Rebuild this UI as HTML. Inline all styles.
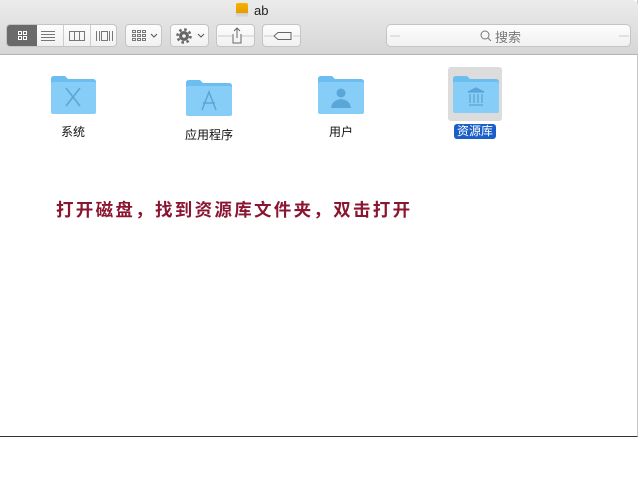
<!DOCTYPE html>
<html><head><meta charset="utf-8"><style>
*{margin:0;padding:0;box-sizing:border-box}
body{width:640px;height:480px;background:#fff;position:relative;overflow:hidden;font-family:"Liberation Sans","Noto Sans CJK SC",sans-serif}
.win{position:absolute;left:0;top:0;width:638px;height:437px;border-right:1px solid #c8c8c8;border-bottom:1px solid #333;background:#fff}
.tb{position:absolute;left:0;top:0;width:638px;height:55px;background:linear-gradient(#ebebeb,#d6d6d6);border-bottom:1px solid #b5b5b5;border-top-right-radius:6px}
.a{position:absolute}
.btn{position:absolute;top:24px;height:23px;background:linear-gradient(#fdfdfd,#f1f1f1);border:1px solid #c4c4c4;border-radius:4px}
.lbl{position:absolute;font-size:12px;color:#111;transform:translateX(-50%);white-space:nowrap}
</style></head><body>
<div class="win">
<div class="tb">
  <div class="a" style="left:236px;top:3px;width:12px;height:14px;background:linear-gradient(#f5b400,#e89a00 70%,#ccc 70%,#ddd);border-radius:2px"></div>
  <div class="a" style="left:254px;top:3px;font-size:13px;color:#222">ab</div>
  <div class="btn" style="left:6px;width:111px;overflow:hidden">
    <div class="a" style="left:0;top:0;width:30px;height:21px;background:#6a6a6a"></div>
    <svg class="a" style="left:0;top:0" width="111" height="21">
      <g fill="none" stroke="#fff" stroke-width="1"><rect x="11.5" y="6.5" width="3" height="3"/><rect x="16.5" y="6.5" width="3" height="3"/><rect x="11.5" y="11.5" width="3" height="3"/><rect x="16.5" y="11.5" width="3" height="3"/></g>
      <g stroke="#777" stroke-width="1" fill="none">
      <path d="M34 6.5h14M34 9.5h14M34 12.5h14M34 15.5h14"/>
      <line x1="56.5" y1="0" x2="56.5" y2="21" stroke="#ccc"/>
      <rect x="62.5" y="6.5" width="15" height="9"/><path d="M67.5 6.5v9M72.5 6.5v9"/>
      <line x1="83.5" y1="0" x2="83.5" y2="21" stroke="#ccc"/>
      <path d="M89.5 6v10M92.5 6v10M102.5 6v10M105.5 6v10"/><rect x="94.5" y="6.5" width="6" height="9"/>
      </g></svg>
  </div>
  <div class="btn" style="left:125px;width:37px"><svg width="37" height="21"><g fill="none" stroke="#777"><rect x="6.5" y="5.5" width="3" height="2"/><rect x="11.5" y="5.5" width="3" height="2"/><rect x="16.5" y="5.5" width="3" height="2"/><rect x="6.5" y="9.5" width="3" height="2"/><rect x="11.5" y="9.5" width="3" height="2"/><rect x="16.5" y="9.5" width="3" height="2"/><rect x="6.5" y="13.5" width="3" height="2"/><rect x="11.5" y="13.5" width="3" height="2"/><rect x="16.5" y="13.5" width="3" height="2"/><path d="M25 9l3 3 3-3" stroke="#555"/></g></svg></div>
  <div class="btn" style="left:170px;width:39px"><svg width="39" height="21"><circle cx="13" cy="11" r="5" fill="#666"/><circle cx="13" cy="11" r="6.5" fill="none" stroke="#666" stroke-width="2.5" stroke-dasharray="2.5 2.6"/><circle cx="13" cy="11" r="1.8" fill="#f5f5f5"/><path d="M27 9l3 3 3-3" stroke="#555" fill="none"/></svg></div>
  <div class="btn" style="left:216px;width:39px"><svg width="39" height="21"><path d="M1 11h14M24 11h14" stroke="#ccc"/><path d="M16 9v9h8V9M20 3v10M17 6l3-3 3 3" fill="none" stroke="#666"/></svg></div>
  <div class="btn" style="left:262px;width:39px"><svg width="39" height="21"><path d="M1 11h9M30 11h8" stroke="#ccc"/><path d="M15 7.5h13v7H15l-4-3.5z" fill="none" stroke="#666"/></svg></div>
  <div class="btn" style="left:386px;width:245px;border-radius:5px"><svg width="245" height="21" class="a"><path d="M3 11h10M232 11h10" stroke="#ccc"/><circle cx="98" cy="10" r="4" fill="none" stroke="#777"/><path d="M101 13l3 3" stroke="#777"/></svg><span class="a" style="left:108px;top:2px;font-size:13px;color:#777">搜索</span></div>
</div>

<svg class="a" style="left:51px;top:76px" width="45" height="38"><path d="M0 3q0-3 3-3h11l3 3h25q3 0 3 3v29q0 3-3 3H3q-3 0-3-3z" fill="#6cbdf0"/><rect x="0" y="6" width="45" height="32" rx="2" fill="#86cdf7"/><path d="M15 12l14 18M29 12L15 30" stroke="#5aa6d8" stroke-width="1.5"/></svg>
<div class="lbl" style="left:73px;top:123px">系统</div>
<svg class="a" style="left:186px;top:80px" width="46" height="36"><path d="M0 3q0-3 3-3h11l3 3h26q3 0 3 3v27q0 3-3 3H3q-3 0-3-3z" fill="#6cbdf0"/><rect x="0" y="6" width="46" height="30" rx="2" fill="#86cdf7"/><path d="M16 30l7-18 7 18M17 23h12" stroke="#5aa6d8" stroke-width="1.5" fill="none"/></svg>
<div class="lbl" style="left:209px;top:126px">应用程序</div>
<svg class="a" style="left:318px;top:76px" width="46" height="38"><path d="M0 3q0-3 3-3h11l3 3h26q3 0 3 3v29q0 3-3 3H3q-3 0-3-3z" fill="#6cbdf0"/><rect x="0" y="6" width="46" height="32" rx="2" fill="#86cdf7"/><circle cx="23" cy="17" r="4.5" fill="#5aa6d8"/><path d="M13 32q1-8 10-9q9 1 10 9z" fill="#5aa6d8"/></svg>
<div class="lbl" style="left:341px;top:123px">用户</div>
<div class="a" style="left:448px;top:67px;width:54px;height:54px;background:#dcdcdc;border-radius:3px"></div>
<svg class="a" style="left:453px;top:76px" width="46" height="37"><path d="M0 3q0-3 3-3h11l3 3h26q3 0 3 3v28q0 3-3 3H3q-3 0-3-3z" fill="#6cbdf0"/><rect x="0" y="6" width="46" height="31" rx="2" fill="#86cdf7"/><path d="M15 16l8-4 8 4zM16 29h14M17 18v9M21 18v9M25 18v9M29 18v9" stroke="#5aa6d8" stroke-width="1.3" fill="#5aa6d8"/></svg>
<div class="a" style="left:454px;top:124px;width:42px;height:15px;background:#1a5fc8;border-radius:3px;color:#fff;font-size:12px;text-align:center;line-height:15px">资源库</div>

<div class="a" style="left:56px;top:197px;font-size:17.5px;font-weight:bold;color:#8a1530;letter-spacing:2.3px;white-space:nowrap">打开磁盘，找到资源库文件夹，双击打开</div>
</div>
</body></html>
